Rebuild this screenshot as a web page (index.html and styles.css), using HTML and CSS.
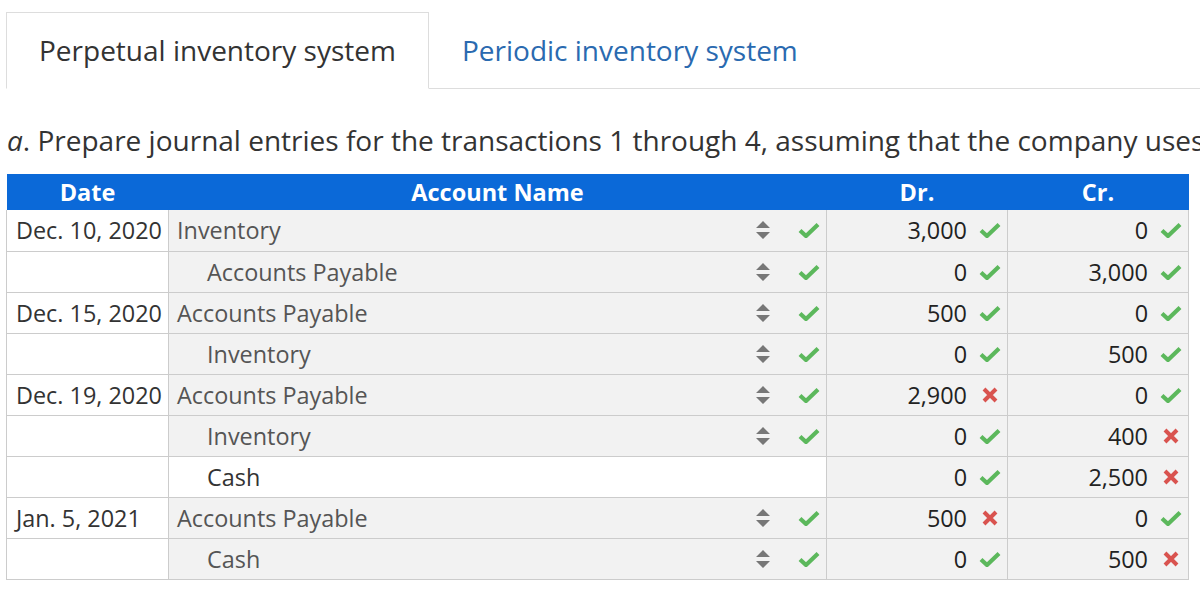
FILE: index.html
```html
<!DOCTYPE html>
<html lang="en">
<head>
  <meta charset="UTF-8">
  <title>Journal entries</title>
  <link rel="stylesheet" href="styles.css">
</head>
<body>
  <div id="page">
    <ul class="tabs">
      <li class="tab active">Perpetual inventory system</li>
      <li class="tab">Periodic inventory system</li>
    </ul>

    <p class="question"><i>a</i>. Prepare journal entries for the transactions 1 through 4, assuming that the company uses the perpetual inventory system.</p>

    <table class="journal">
      <colgroup>
        <col class="col-date"><col class="col-account"><col class="col-amount"><col class="col-amount">
      </colgroup>
      <thead>
        <tr><th>Date</th><th>Account Name</th><th>Dr.</th><th>Cr.</th></tr>
      </thead>
      <tbody id="rows"></tbody>
    </table>
  </div>

  <script>
    const entries = [
      ['Dec. 10, 2020', 'Inventory', false, true, '3,000', true, '0', true],
      ['', 'Accounts Payable', true, true, '0', true, '3,000', true],
      ['Dec. 15, 2020', 'Accounts Payable', false, true, '500', true, '0', true],
      ['', 'Inventory', true, true, '0', true, '500', true],
      ['Dec. 19, 2020', 'Accounts Payable', false, true, '2,900', false, '0', true],
      ['', 'Inventory', true, true, '0', true, '400', false],
      ['', 'Cash', true, null, '0', true, '2,500', false],
      ['Jan. 5, 2021', 'Accounts Payable', false, true, '500', false, '0', true],
      ['', 'Cash', true, true, '0', true, '500', false]
    ];

    const check = '<svg class="mark" width="22" height="16" viewBox="0 0 22 16"><path d="M2 8.5 L8 14 L20 2.5" fill="none" stroke="#5cb85c" stroke-width="4.2"/></svg>';
    const cross = '<svg class="mark" width="22" height="16" viewBox="0 0 22 16"><path d="M5 2 L17 14 M17 2 L5 14" fill="none" stroke="#d9534f" stroke-width="4"/></svg>';
    const sort = '<svg class="sort" width="14" height="20" viewBox="0 0 14 20"><path d="M0 8 L7 1 L14 8 Z M0 12 L14 12 L7 19 Z" fill="#777"/></svg>';

    function mark(ok) {
      return ok ? check : cross;
    }

    let html = '';
    entries.forEach(function(e) {
      let account;
      if (e[3] === null) {
        account = `<td class="account plain"><span class="name${e[2] ? ' indent' : ''}">${e[1]}</span></td>`;
      } else {
        account = `<td class="account"><div class="cell"><span class="name${e[2] ? ' indent' : ''}">${e[1]}</span>${sort}${mark(e[3])}</div></td>`;
      }
      html += `<tr>
        <td class="date">${e[0]}</td>
        ${account}
        <td class="amount"><div class="cell"><span class="num">${e[4]}</span>${mark(e[5])}</div></td>
        <td class="amount"><div class="cell"><span class="num">${e[6]}</span>${mark(e[7])}</div></td>
      </tr>`;
    });
    document.getElementById('rows').innerHTML = html;
  </script>
</body>
</html>
```

FILE: styles.css
```css
* {
  margin:0;
  padding:0;
  box-sizing:border-box;
}

body {
  font-family:"Open Sans", "Noto Sans", sans-serif;
  color:#333;
  background:#fff;
  overflow:hidden;
}

#page {
  width:1200px;
  padding:12px 0 0 6px;
  white-space:nowrap;
}

.tabs {
  list-style:none;
  display:flex;
  border-bottom:1px solid #ddd;
}

.tab {
  font-size:28px;
  line-height:38px;
  padding:18px 32px 19px;
  color:#2a6ab0;
  border:1px solid transparent;
  margin-bottom:-1px;
}

.tab.active {
  color:#333;
  background:#fff;
  border-color:#ddd;
  border-bottom-color:#fff;
}

.question {
  font-size:28px;
  line-height:36px;
  margin:33px 0 16px 1px;
  overflow:hidden;
}

.journal {
  border-collapse:collapse;
  table-layout:fixed;
  width:1182px;
  font-size:23.4px;
}

.col-date { width:162px; }
.col-account { width:658px; }
.col-amount { width:181px; }

.journal th {
  background:#0b69d8;
  color:#fff;
  font-weight:bold;
  font-size:23.5px;
  height:36px;
  padding:0;
  text-align:center;
  line-height:36px;
}

.journal td {
  border:1px solid #ccc;
  height:41px;
  padding:0;
  vertical-align:middle;
}

.journal tr:first-child td {
  border-top:none;
}

.date {
  background:#fff;
  padding-left:9px !important;
  color:#333;
}

.account, .amount {
  background:#f2f2f2;
}

.account.plain {
  background:#fff;
}

.cell {
  display:flex;
  align-items:center;
  height:40px;
  padding-right:6px;
}

.name {
  flex:1;
  padding-left:8px;
  color:#555;
}

.plain .name {
  color:#333;
  padding-left:8px;
}

.name.indent {
  padding-left:38px;
}

.sort {
  margin-right:28px;
}

.amount .cell {
  justify-content:flex-end;
}

.num {
  margin-right:12px;
  color:#222;
}
```
